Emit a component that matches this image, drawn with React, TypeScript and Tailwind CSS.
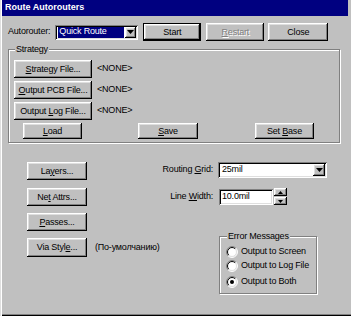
import React from 'react';

const raised = 'shadow-[inset_-1px_-1px_#000,inset_1px_1px_#fff,inset_-2px_-2px_#808080,inset_2px_2px_#dfdfdf]';
const raisedDefault = 'shadow-[inset_-1px_-1px_#000,inset_1px_1px_#000,inset_-2px_-2px_#000,inset_2px_2px_#fff,inset_-3px_-3px_#808080,inset_3px_3px_#dfdfdf]';
const sunken = 'shadow-[inset_1px_1px_#808080,inset_-1px_-1px_#fff,inset_2px_2px_#000,inset_-2px_-2px_#dfdfdf]';

function Btn({ className, children, def, disabled }: { className: string; children: React.ReactNode; def?: boolean; disabled?: boolean }) {
  return (
    <div className={`flex shrink-0 items-center justify-center bg-[#c0c0c0] ${def ? raisedDefault : raised} ${disabled ? 'text-[#808080] [text-shadow:1px_1px_#fff]' : 'text-black'} ${className}`}>
      <span className="leading-none">{children}</span>
    </div>
  );
}

function Arrow({ up }: { up?: boolean }) {
  return (
    <svg width="7" height="4" viewBox="0 0 7 4">
      <path d={up ? 'M3.5 0L7 4H0z' : 'M0 0h7L3.5 4z'} fill="#000" />
    </svg>
  );
}

function Combo({ className, value, selected }: { className: string; value: string; selected?: boolean }) {
  return (
    <div className={`flex shrink-0 items-center bg-white p-[2px] ${sunken} ${className}`}>
      <div className="flex h-full flex-1 items-center pl-[1px] pr-[1px]">
        <span className={`flex h-full items-center pl-[1px] ${selected ? 'w-[66px] bg-[#000080] text-white' : 'text-black'}`}>{value}</span>
      </div>
      <div className={`flex h-full w-[12px] items-center justify-center bg-[#c0c0c0] ${raised}`}>
        <Arrow />
      </div>
    </div>
  );
}

function Radio({ checked, label }: { checked?: boolean; label: string }) {
  const a = 5.5 * 0.7071;
  const b = 4.5 * 0.7071;
  return (
    <div className="flex h-[14px] items-center">
      <svg width="12" height="12" viewBox="0 0 12 12" className="shrink-0">
        <circle cx="6" cy="6" r="5" fill="#fff" />
        <path d={`M${6 - a} ${6 + a}A5.5 5.5 0 0 1 ${6 + a} ${6 - a}`} stroke="#808080" fill="none" />
        <path d={`M${6 + a} ${6 - a}A5.5 5.5 0 0 1 ${6 - a} ${6 + a}`} stroke="#fff" fill="none" />
        <path d={`M${6 - b} ${6 + b}A4.5 4.5 0 0 1 ${6 + b} ${6 - b}`} stroke="#000" fill="none" />
        <path d={`M${6 + b} ${6 - b}A4.5 4.5 0 0 1 ${6 - b} ${6 + b}`} stroke="#dfdfdf" fill="none" />
        {checked && <circle cx="6" cy="6" r="2" fill="#000" />}
      </svg>
      <span className="ml-[3px]">{label}</span>
    </div>
  );
}

export default function App() {
  return (
    <div className="relative h-[316px] w-[351px] overflow-hidden bg-[#c0c0c0] pl-[2px] font-['Liberation_Sans',Arial,sans-serif] text-[9px] tracking-[-0.2px] text-black shadow-[inset_1px_0_#dfdfdf,inset_2px_0_#fff,inset_0_-1px_#000,inset_0_-2px_#808080]">
      <div className="flex h-[16px] w-[346px] items-center bg-[#000080] pl-[3px] text-[9px] font-bold tracking-normal text-white">
        Route Autorouters
      </div>

      <div className="mt-[7px] flex h-[18px] items-center pl-[6px]">
        <span>Autorouter:</span>
        <Combo className="ml-[5px] h-[15px] w-[83px]" value="Quick Route" selected />
        <Btn className="ml-[5px] h-[18px] w-[58px]" def>Start</Btn>
        <Btn className="ml-[5px] h-[18px] w-[58px]" disabled><u>R</u>estart</Btn>
        <Btn className="ml-[4px] h-[18px] w-[60px]">Close</Btn>
      </div>

      <div className="relative ml-[6px] mt-[8px] h-[94px] w-[332px] border border-[#808080] pl-[5px] pt-[10px] shadow-[1px_1px_#fff,inset_1px_1px_#fff]">
        <span className="absolute left-[6px] top-[-7px] bg-[#c0c0c0] px-[1px]">Strategy</span>
        <div className="flex h-[18px] items-center">
          <Btn className="h-[18px] w-[78px]"><u>S</u>trategy File...</Btn>
          <span className="ml-[5px]">&lt;NONE&gt;</span>
        </div>
        <div className="mt-[3px] flex h-[18px] items-center">
          <Btn className="h-[18px] w-[78px]"><u>O</u>utput PCB File...</Btn>
          <span className="ml-[5px]">&lt;NONE&gt;</span>
        </div>
        <div className="mt-[3px] flex h-[18px] items-center">
          <Btn className="h-[18px] w-[78px]">Output <u>L</u>og File...</Btn>
          <span className="ml-[5px]">&lt;NONE&gt;</span>
        </div>
        <div className="mt-[3px] flex h-[16px] items-center pl-[9px]">
          <Btn className="h-[16px] w-[59px]"><u>L</u>oad</Btn>
          <Btn className="ml-[56px] h-[16px] w-[60px]"><u>S</u>ave</Btn>
          <Btn className="ml-[57px] h-[16px] w-[59px]">Set <u>B</u>ase</Btn>
        </div>
      </div>

      <div className="mt-[19px] flex">
        <div className="ml-[25px] flex w-[133px] flex-col">
          <Btn className="h-[18px] w-[60px]">La<u>y</u>ers...</Btn>
          <Btn className="mt-[8px] h-[18px] w-[60px]">Ne<u>t</u> Attrs...</Btn>
          <Btn className="mt-[7px] h-[18px] w-[60px]"><u>P</u>asses...</Btn>
          <div className="mt-[7px] flex h-[19px] items-center">
            <Btn className="h-[19px] w-[60px]">Via Styl<u>e</u>...</Btn>
            <span className="ml-[8px]">(По-умолчанию)</span>
          </div>
        </div>

        <div className="flex flex-col">
          <div className="flex h-[16px] items-center">
            <span className="w-[53px] text-right">Routing <u>G</u>rid:</span>
            <Combo className="ml-[5px] h-[16px] w-[109px]" value="25mil" />
          </div>
          <div className="mt-[10px] flex h-[17px] items-center">
            <span className="w-[53px] text-right">Line <u>W</u>idth:</span>
            <div className={`ml-[6px] flex h-[16px] w-[54px] items-center bg-white pl-[3px] ${sunken}`}>10.0mil</div>
            <div className="ml-[1px] flex h-[17px] w-[13px] flex-col">
              <div className={`flex h-[8px] items-center justify-center bg-[#c0c0c0] ${raised}`}>
                <svg width="5" height="3" viewBox="0 0 5 3"><path d="M2.5 0L5 3H0z" fill="#000" /></svg>
              </div>
              <div className={`mt-[1px] flex h-[8px] items-center justify-center bg-[#c0c0c0] ${raised}`}>
                <svg width="5" height="3" viewBox="0 0 5 3"><path d="M0 0h5L2.5 3z" fill="#000" /></svg>
              </div>
            </div>
          </div>

          <div className="relative ml-[59px] mt-[31px] h-[58px] w-[98px] border border-[#808080] pl-[6px] pt-[8px] shadow-[1px_1px_#fff,inset_1px_1px_#fff]">
            <span className="absolute left-[7px] top-[-7px] bg-[#c0c0c0] px-[1px]">Error Messages</span>
            <Radio label="Output to Screen" />
            <Radio label="Output to Log File" />
            <div className="mt-[2px]">
              <Radio label="Output to Both" checked />
            </div>
          </div>
        </div>
      </div>
    </div>
  );
}
